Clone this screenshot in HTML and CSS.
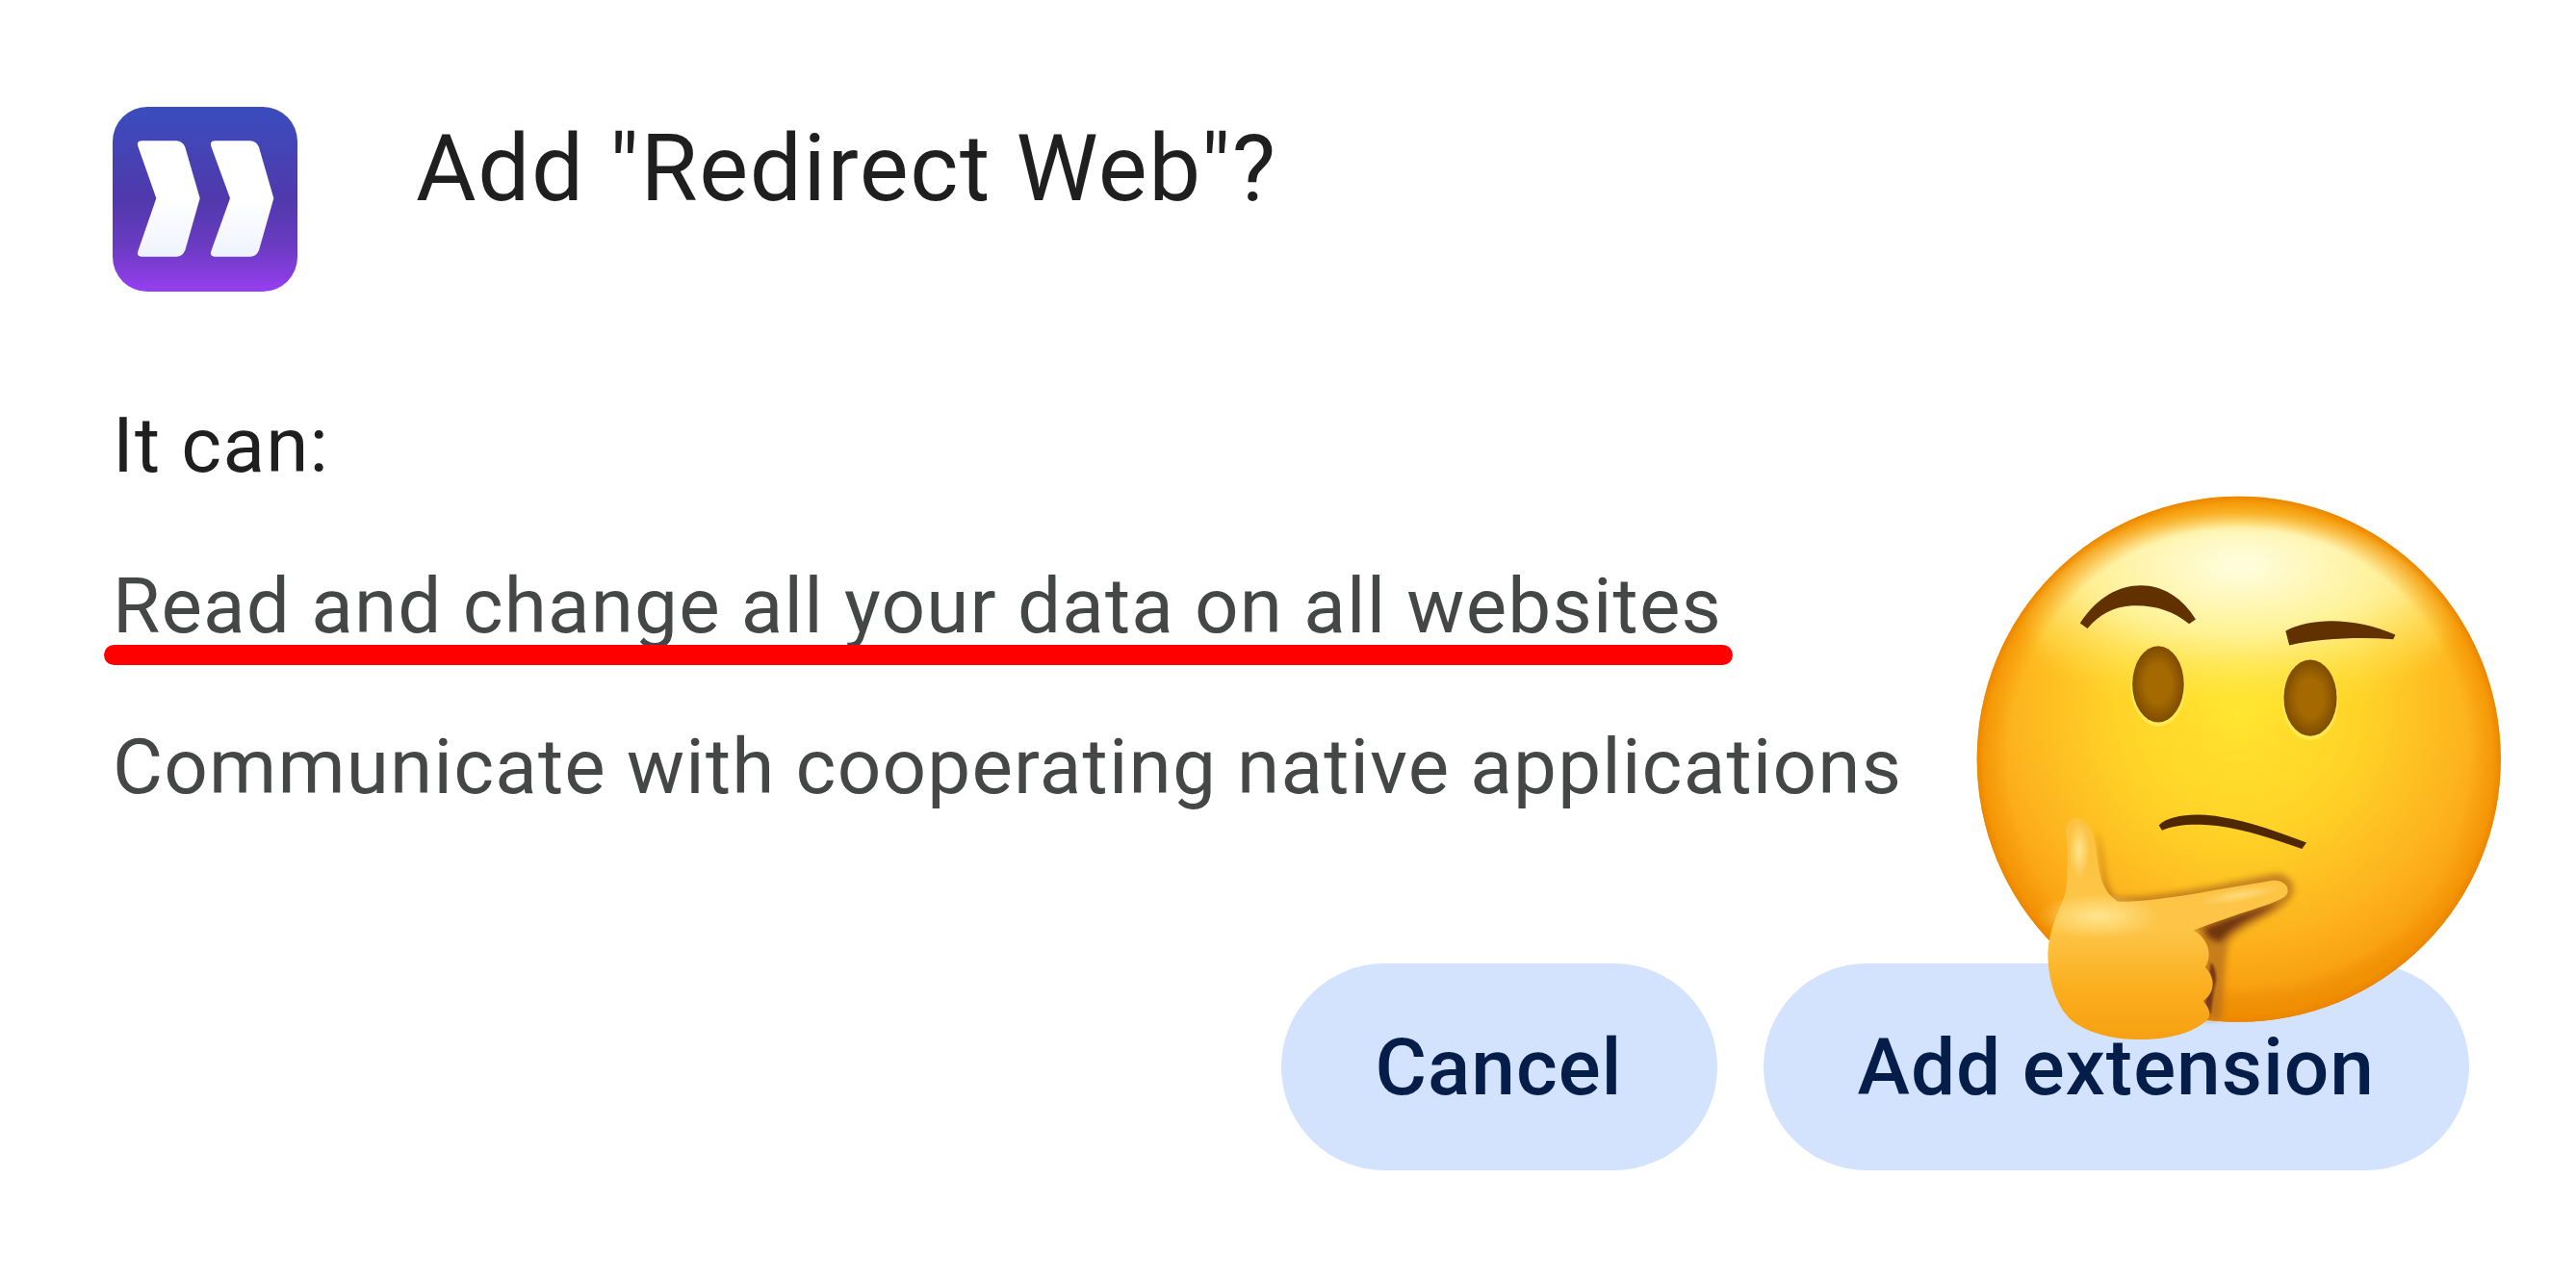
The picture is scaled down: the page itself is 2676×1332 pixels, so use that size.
FILE: index.html
```html
<!DOCTYPE html>
<html lang="en">
<head>
    <meta charset="UTF-8">
    <title>Add extension</title>
    <link rel="stylesheet" href="styles.css">
</head>
<body>
    <div class="dialog">
        <div class="header">
            <svg class="app-icon" viewBox="0 0 576 576">
                <defs>
                    <linearGradient id="iconBg" x1="0" y1="0" x2="0" y2="1">
                        <stop offset="0" stop-color="#3a4dbd"/>
                        <stop offset="0.5" stop-color="#5039ad"/>
                        <stop offset="0.75" stop-color="#6a3bc0"/>
                        <stop offset="1" stop-color="#963ff0"/>
                    </linearGradient>
                    <linearGradient id="iconArrow" x1="0" y1="0" x2="0" y2="1">
                        <stop offset="0.5" stop-color="#ffffff"/>
                        <stop offset="1" stop-color="#eff3fd"/>
                    </linearGradient>
                </defs>
                <rect width="576" height="576" rx="108" fill="url(#iconBg)"/>
                <path d="M92 106H198Q218 106 226 126L272 285L226 447Q218 467 198 467H92Q72 467 80 447L136 285L80 126Q72 106 92 106Z" fill="url(#iconArrow)"/>
                <path d="M320 106H428Q448 106 456 126L502 285L456 447Q448 467 428 467H320Q300 467 308 447L366 285L308 126Q300 106 320 106Z" fill="url(#iconArrow)"/>
            </svg>
            <h1 class="title">Add "Redirect Web"?</h1>
        </div>

        <p class="lead">It can:</p>
        <p class="perm">Read and change all your data on all websites<span class="red-line"></span></p>
        <p class="perm">Communicate with cooperating native applications</p>

        <div class="actions">
            <button class="btn">Cancel</button>
            <button class="btn">Add extension</button>
        </div>
    </div>

    <svg class="emoji" viewBox="0 0 1568 1620">
        <defs>
            <radialGradient id="face" cx="0.5" cy="0.4" r="0.6">
                <stop offset="0" stop-color="#ffe62f"/>
                <stop offset="0.4" stop-color="#ffd228"/>
                <stop offset="0.72" stop-color="#fdb41d"/>
                <stop offset="0.88" stop-color="#f9a112"/>
                <stop offset="1" stop-color="#e27f03"/>
            </radialGradient>
            <radialGradient id="rim" cx="0.5" cy="0.5" r="0.5">
                <stop offset="0.88" stop-color="#f39200" stop-opacity="0"/>
                <stop offset="0.97" stop-color="#f39200" stop-opacity="0.7"/>
                <stop offset="1" stop-color="#ec8500"/>
            </radialGradient>
            <radialGradient id="shine" cx="0.5" cy="0.25" r="0.75">
                <stop offset="0" stop-color="#fffee4"/>
                <stop offset="0.5" stop-color="#fff7a6" stop-opacity="0.85"/>
                <stop offset="1" stop-color="#ffe640" stop-opacity="0"/>
            </radialGradient>
            <linearGradient id="hand" x1="0" y1="0" x2="0" y2="1">
                <stop offset="0" stop-color="#fcc240"/>
                <stop offset="0.5" stop-color="#fdc548"/>
                <stop offset="0.75" stop-color="#fbb020"/>
                <stop offset="1" stop-color="#f6a012"/>
            </linearGradient>
            <radialGradient id="palm" cx="0.5" cy="0.5" r="0.5">
                <stop offset="0" stop-color="#ffe590"/>
                <stop offset="1" stop-color="#ffe590" stop-opacity="0"/>
            </radialGradient>
            <radialGradient id="eye" cx="0.5" cy="0.5" r="0.5">
                <stop offset="0.5" stop-color="#a46900"/>
                <stop offset="1" stop-color="#7f4c00"/>
            </radialGradient>
            <clipPath id="faceClip"><ellipse cx="799" cy="755" rx="711" ry="690"/></clipPath>
            <filter id="soft"><feGaussianBlur stdDeviation="24"/></filter>
            <filter id="softer"><feGaussianBlur stdDeviation="10"/></filter>
            <filter id="softest"><feGaussianBlur stdDeviation="3"/></filter>
        </defs>
        <g transform="scale(1 1.034)">
            <ellipse cx="799" cy="755" rx="711" ry="690" fill="url(#face)"/>
            <ellipse cx="800" cy="370" rx="590" ry="250" fill="url(#shine)" filter="url(#soft)" clip-path="url(#faceClip)"/>
            <ellipse cx="799" cy="755" rx="711" ry="690" fill="url(#rim)"/>

            <path d="M368 398C420 320 490 292 555 300C612 308 655 345 682 388L664 400C620 365 570 350 510 352C460 354 420 375 388 412Z" fill="#623100"/>
            <path d="M926 418C1000 380 1120 384 1224 428L1218 440C1120 434 1020 438 936 456Z" fill="#623100"/>
            <ellipse cx="580" cy="558" rx="74" ry="104" fill="#fff36b" opacity="0.6" transform="translate(0 7)"/>
            <ellipse cx="580" cy="558" rx="70" ry="100" fill="url(#eye)"/>
            <ellipse cx="993" cy="594" rx="76" ry="104" fill="#fff36b" opacity="0.6" transform="translate(0 7)"/>
            <ellipse cx="993" cy="594" rx="72" ry="100" fill="url(#eye)"/>
        </g>

        <!-- mouth and hand, drawn in the 3x crop's own coordinates -->
        <g transform="translate(52.3 862.4) scale(0.8711)">
            <path d="M608 112C640 80 720 72 800 86C900 102 990 138 1068 166L1054 186C960 154 880 126 790 114C720 106 660 110 618 128Z" fill="#4f2800"/>

            <path d="M415 130C440 190 430 280 470 335C620 340 820 290 970 262C1020 262 1050 310 1010 350C960 400 880 420 830 470C810 520 810 640 805 715L750 720L730 440L440 350Z" fill="#b5701b" opacity="0.75" filter="url(#softer)"/>
            <path d="M745 435C830 395 920 375 980 350C930 395 850 410 805 470C790 490 785 460 770 470Z" fill="#6f3410" filter="url(#softer)"/>
            <path d="M770 540C790 560 790 600 780 620L770 700L750 690L760 600Z" fill="#7a3a12" filter="url(#softest)"/>

            <path d="M350 90C385 92 405 125 412 180C420 250 425 315 480 350C600 352 800 310 960 285C1000 280 1020 310 1005 330C985 355 870 380 715 440C755 460 780 510 752 555C785 585 785 635 745 660C775 690 770 715 745 730C700 765 620 780 550 780C470 780 380 760 330 715C285 670 262 590 262 510C265 440 295 380 315 330C330 270 322 180 318 130C320 105 330 92 350 90Z" fill="url(#hand)"/>
            <ellipse cx="420" cy="395" rx="190" ry="70" fill="url(#palm)"/>
            <ellipse cx="360" cy="190" rx="32" ry="90" fill="url(#palm)"/>
            <ellipse cx="860" cy="330" rx="130" ry="22" transform="rotate(-10 860 330)" fill="url(#palm)" opacity="0.7"/>
        </g>
    </svg>
</body>
</html>
```
FILE: styles.css
```css
body {
    margin: 0;
    background-color: #fff;
    font-family: Roboto, "Liberation Sans", sans-serif;
}
.dialog {
    padding: 111px 111px 0 117px;
}
.header {
    display: flex;
    align-items: flex-start;
    gap: 123px;
    margin-bottom: 112px;
}
.app-icon {
    width: 192px;
    height: 192px;
    flex: none;
}
.title {
    margin: 9px 0 0;
    font-size: 96px;
    font-weight: 400;
    line-height: 110px;
    letter-spacing: 1.6px;
    color: #1f1f1f;
}
.lead {
    margin: 0 0 70px;
    font-size: 80px;
    line-height: 97px;
    letter-spacing: 1.2px;
    color: #1f1f1f;
}
.perm {
    position: relative;
    margin: 0 0 70px;
    font-size: 80px;
    line-height: 97px;
    letter-spacing: 1.2px;
    color: #444746;
}
.red-line {
    position: absolute;
    left: -9px;
    top: 88px;
    width: 1692px;
    height: 21px;
    border-radius: 11px;
    background-color: #fe0000;
}
.actions {
    display: flex;
    justify-content: flex-end;
    gap: 48px;
    margin-top: 155px;
}
.btn {
    height: 215px;
    padding: 0 98px;
    border: none;
    border-radius: 108px;
    background-color: #d3e3fd;
    color: #041e49;
    font-family: inherit;
    font-size: 82px;
    font-weight: 500;
    letter-spacing: 1px;
}
.emoji {
    position: absolute;
    left: 2020px;
    top: 490px;
    width: 600px;
    height: 620px;
}
```
